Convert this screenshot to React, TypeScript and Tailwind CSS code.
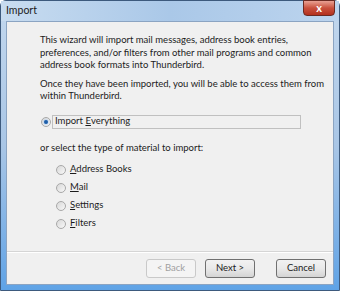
import React from 'react';

const OPTIONS = [
  { first: 'A', rest: 'ddress Books' },
  { first: 'M', rest: 'ail' },
  { first: 'S', rest: 'ettings' },
  { first: 'F', rest: 'ilters' },
];

function Radio({ checked }: { checked?: boolean }) {
  return (
    <span className="relative inline-flex h-[10px] w-[10px] shrink-0 items-center justify-center rounded-full border border-[#a8a8a8] bg-gradient-to-br from-[#d8d8d8] to-[#f8f8f8]">
      {checked && <span className="h-[4px] w-[4px] rounded-full bg-[#1f5fa8] shadow-[0_0_2px_#6ab0ff]" />}
    </span>
  );
}

function Btn({ label, disabled }: { label: string; disabled?: boolean }) {
  return (
    <div
      className={`flex h-[19px] w-[50px] items-center justify-center rounded-[3px] border text-[9.5px] ${
        disabled
          ? 'border-[#c9c9c9] bg-[#f4f4f4] text-[#a0a0a0]'
          : 'border-[#707070] bg-gradient-to-b from-[#f2f2f2] via-[#e9e9e9] to-[#d4d4d4] text-[#1a1a1a]'
      }`}
    >
      {label}
    </div>
  );
}

export default function App() {
  return (
    <div
      className="flex h-[291px] w-[340px] flex-col rounded-t-[6px] border border-[#3d5a7d] bg-gradient-to-b from-[#c3d8ee] via-[#a9c6e6] to-[#5fa3e6] text-[#1c1c1c]"
      style={{ fontFamily: 'Lato, "Open Sans", sans-serif' }}
    >
      <div className="relative flex h-[20px] shrink-0 items-center bg-gradient-to-r from-[#c8dcf0] via-[#aac8e8] to-[#bcd4ee] pl-[5px] text-[10.5px]">
        <span>Import</span>
        <div className="absolute right-[4px] top-[-1px] flex h-[16px] w-[32px] items-center justify-center rounded-b-[4px] border border-[#6b2a22] bg-gradient-to-b from-[#e8a093] via-[#c9503d] to-[#b3301e] text-[11px] font-bold text-white">
          x
        </div>
      </div>
      <div className="mx-[5px] mb-[5px] flex flex-1 flex-col border border-[#8ba4c2] bg-[#f0f0f0]">
        <div className="flex flex-1 flex-col whitespace-nowrap pl-[33px] pt-[12px] text-[9.5px] leading-[12.5px]">
          <p>
            This wizard will import mail messages, address book entries,
            <br />
            preferences, and/or filters from other mail programs and common
            <br />
            address book formats into Thunderbird.
          </p>
          <p className="mt-[6px]">
            Once they have been imported, you will be able to access them from
            <br />
            within Thunderbird.
          </p>
          <div className="mt-[12px] flex items-center gap-[1px] pl-[1px]">
            <Radio checked />
            <div className="flex h-[14px] w-[249px] items-center border border-[#c0c0c0] pl-[2px]">
              Import&nbsp;<u>E</u>verything
            </div>
          </div>
          <p className="mt-[13px]">or select the type of material to import:</p>
          <div className="mt-[9px] flex flex-col gap-[5px] pl-[16px]">
            {OPTIONS.map((o) => (
              <div key={o.first} className="flex h-[13px] items-center gap-[4px]">
                <Radio />
                <span>
                  <u>{o.first}</u>
                  {o.rest}
                </span>
              </div>
            ))}
          </div>
        </div>
        <div className="h-[2px] border-t border-b border-t-[#d5d5d5] border-b-white" />
        <div className="flex h-[31px] items-center justify-end pr-[7px]">
          <Btn label="< Back" disabled />
          <div className="ml-[9px]">
            <Btn label="Next >" />
          </div>
          <div className="ml-[21px]">
            <Btn label="Cancel" />
          </div>
        </div>
      </div>
    </div>
  );
}
